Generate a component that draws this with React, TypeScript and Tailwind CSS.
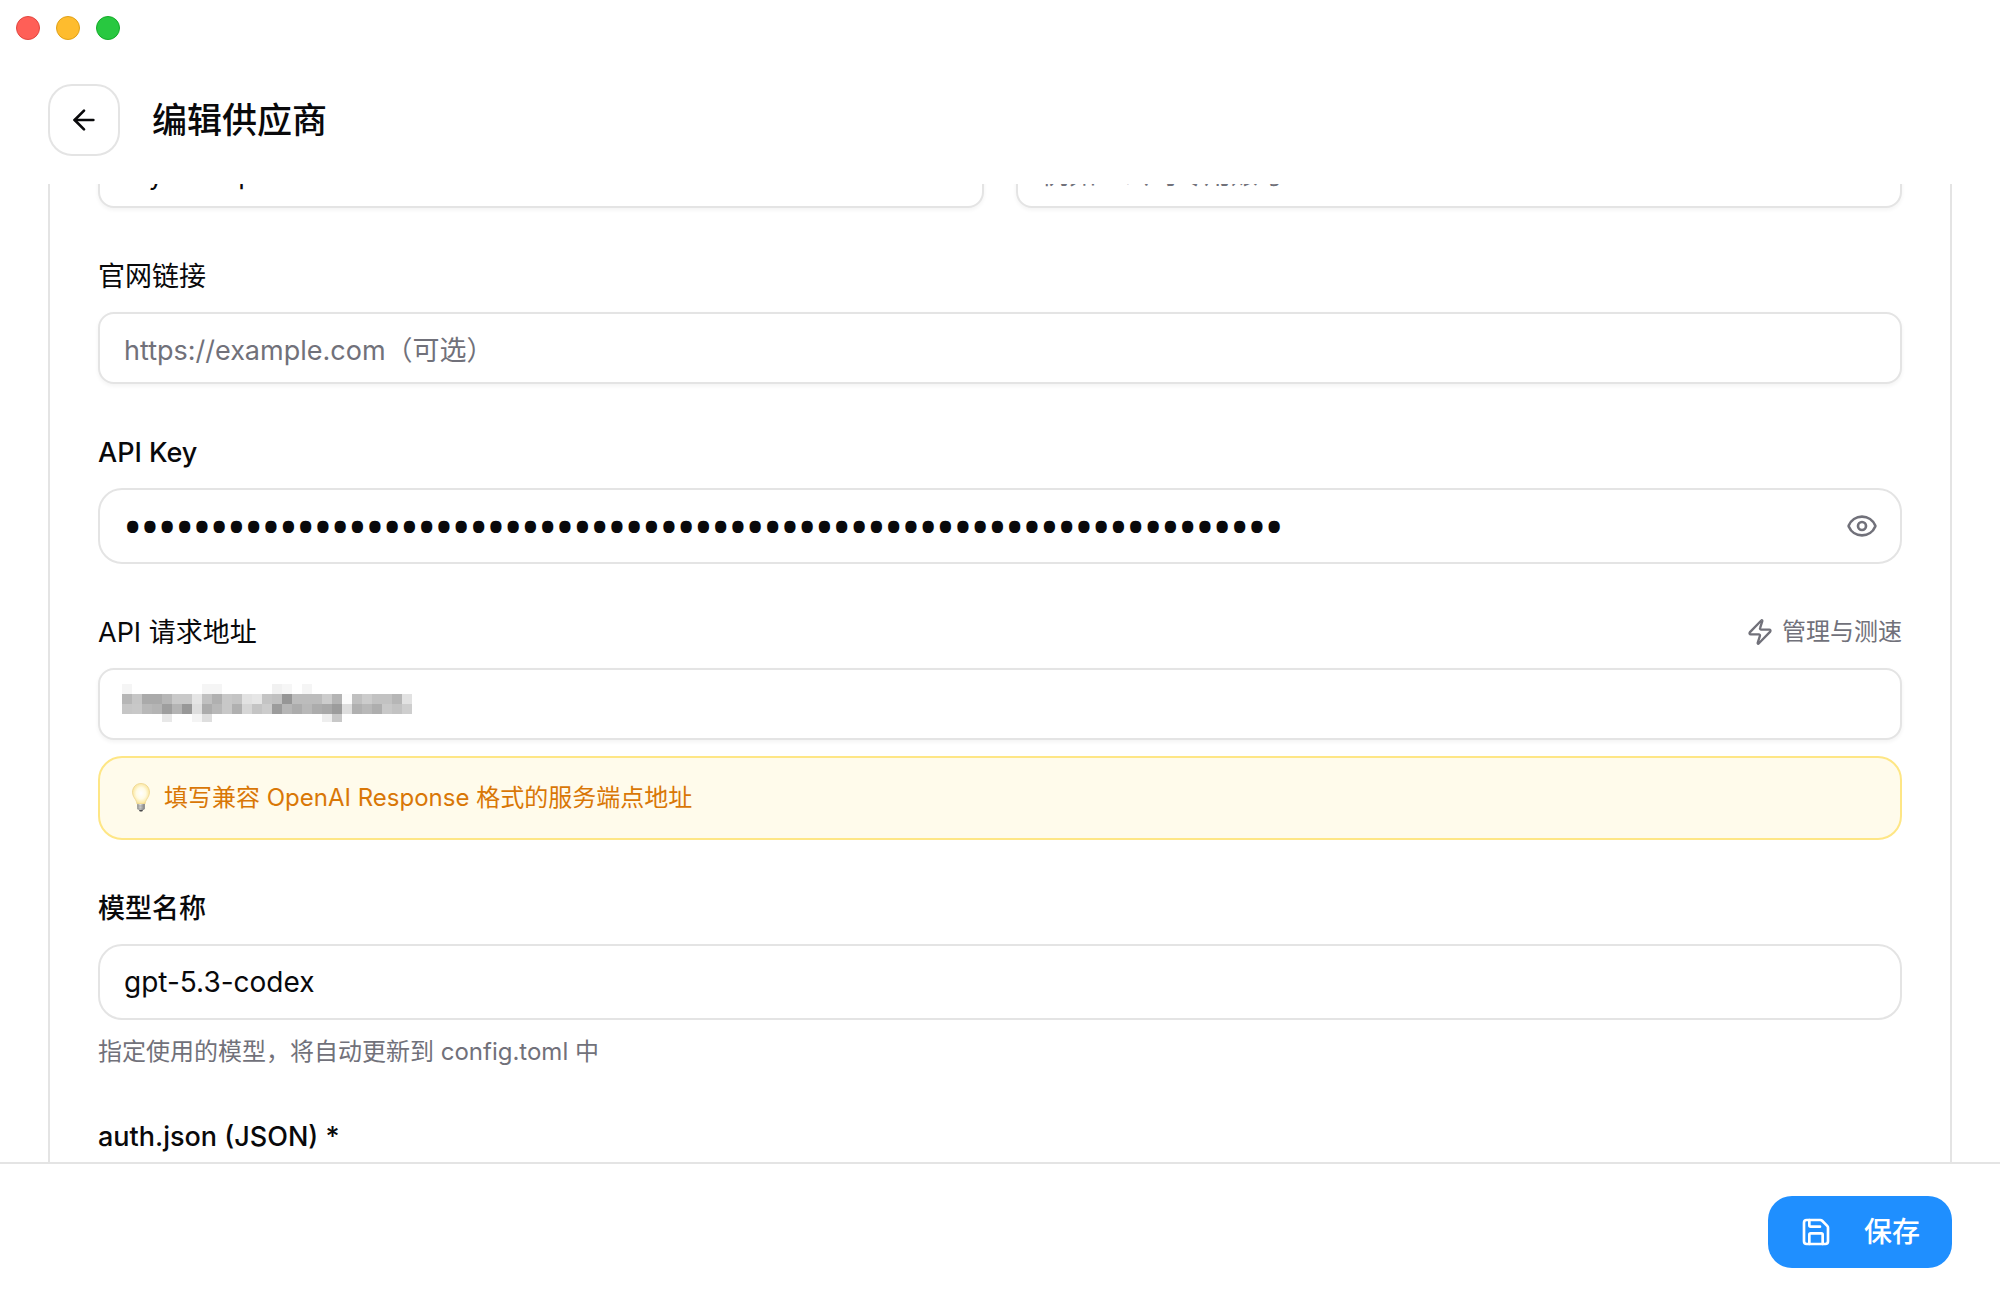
import { useLayoutEffect, useRef, useState } from "react";
import type { InputHTMLAttributes, ReactNode } from "react";
import { clsx } from "clsx";
import { ArrowLeft, Eye, EyeOff, Save, Zap } from "lucide-react";

const SCROLL_START = 154;

// Gray levels of the masked address, one list per row of cells.
const MASK_ROWS: { y: number; height: number; cells: Record<number, string> }[] = [
  { y: 0, height: 10, cells: { 0: "f5", 8: "f5", 9: "f5", 15: "f1", 16: "f6", 18: "f5" } },
  { y: 10, height: 10, cells: toCells("b6 c6 aa aa b6 c9 c9 e5 c0 b0 c8 c4 e2 e6 c4 c0 96 bc bc bc cc b4 fc c0 cc c2 c2 b6 e2") },
  { y: 20, height: 10, cells: toCells("c6 c8 b8 b4 9e b4 98 de ac b8 c8 b0 d6 c4 cc 9c b6 ac b8 ac a8 9c de b0 b8 ae c8 c2 ce") },
  { y: 30, height: 8, cells: { 4: "e8", 7: "f4", 8: "de", 20: "ee", 21: "c8" } },
];

function toCells(row: string) {
  return Object.fromEntries(row.split(" ").map((gray, i) => [i, gray]));
}

function MaskedValue() {
  return (
    <svg width="290" height="40" viewBox="0 0 290 40" shapeRendering="crispEdges" aria-hidden="true">
      {MASK_ROWS.map((row) =>
        Object.entries(row.cells).map(([i, gray]) => (
          <rect
            key={`${row.y}-${i}`}
            x={Number(i) * 10}
            y={row.y}
            width="10"
            height={row.height}
            fill={`#${gray}${gray}${gray}`}
          />
        ))
      )}
    </svg>
  );
}

function BulbIcon() {
  return (
    <svg width="28" height="32" viewBox="0 0 28 32" aria-hidden="true" className="shrink-0">
      <defs>
        <radialGradient id="bulb-glass" cx="50%" cy="48%" r="55%">
          <stop offset="0" stopColor="#ffffff" />
          <stop offset="0.5" stopColor="#fffbe4" />
          <stop offset="0.85" stopColor="#fbe9a8" />
          <stop offset="1" stopColor="#efd488" />
        </radialGradient>
        <linearGradient id="bulb-base" x1="0" x2="1" y1="0" y2="0">
          <stop offset="0" stopColor="#8f8f8c" />
          <stop offset="0.4" stopColor="#e4e4e2" />
          <stop offset="1" stopColor="#77777a" />
        </linearGradient>
      </defs>
      <path
        d="M13 1.500C7.900 1.500 4.500 5.400 4.500 10.100c0 3.200 1.500 5.200 2.900 7.400 1 1.600 1.300 2.700 1.600 4.500h8c.3-1.800.6-2.900 1.600-4.500 1.400-2.200 2.900-4.200 2.900-7.400C21.500 5.400 18.100 1.500 13 1.500Z"
        fill="url(#bulb-glass)"
        stroke="#eed68f"
        strokeWidth="0.8"
      />
      <path d="M9.200 22h7.600v4.200c0 1-.8 1.800-1.800 1.800h-4c-1 0-1.800-.8-1.800-1.800Z" fill="url(#bulb-base)" />
      <path d="M9.200 24h7.600M9.400 26.100h7.200" stroke="#8a8a88" strokeWidth="0.7" />
      <path d="M10.800 27.800h4.400l-1 1.700h-2.400Z" fill="#4b4b4d" />
    </svg>
  );
}

function Field({
  id,
  label,
  labelWeight = "font-medium",
  action,
  children,
}: {
  id: string;
  label: string;
  labelWeight?: string;
  action?: ReactNode;
  children: ReactNode;
}) {
  return (
    <div className="flex flex-col gap-4">
      <div className="flex items-center justify-between">
        <label htmlFor={id} className={clsx("pt-0.5 text-[27px] leading-[38px]", labelWeight)}>
          {label}
        </label>
        {action}
      </div>
      {children}
    </div>
  );
}

function Input(props: InputHTMLAttributes<HTMLInputElement>) {
  return (
    <input
      {...props}
      className="h-[72px] w-full rounded-2xl border-2 border-[#e4e4e4] bg-white px-6 pt-1 text-[27px] shadow-[0_2px_4px_rgba(0,0,0,0.05)] outline-none placeholder:text-[#71717a]"
    />
  );
}

export default function App() {
  const scrollRef = useRef<HTMLElement>(null);
  const [showKey, setShowKey] = useState(false);
  const [apiKey, setApiKey] = useState("x".repeat(67));

  useLayoutEffect(() => {
    if (scrollRef.current) {
      scrollRef.current.scrollTop = SCROLL_START;
    }
  }, []);

  return (
    <div className="flex h-screen flex-col bg-white font-[Inter,'Noto_Sans_CJK_SC',sans-serif] text-[#09090b]">
      <div className="flex h-14 shrink-0 items-center gap-4 px-4">
        <span className="size-6 rounded-full border border-[#e2463f] bg-[#ff5f57]" />
        <span className="size-6 rounded-full border border-[#e1a116] bg-[#febc2e]" />
        <span className="size-6 rounded-full border border-[#12ac28] bg-[#28c840]" />
      </div>

      <header className="flex h-32 shrink-0 items-center gap-8 px-12">
        <button
          type="button"
          aria-label="返回"
          className="grid size-[72px] place-items-center rounded-3xl border-2 border-[#e4e4e4] bg-white"
        >
          <ArrowLeft size={32} />
        </button>
        <h1 className="text-[35px] leading-none font-medium">编辑供应商</h1>
      </header>

      <main ref={scrollRef} className="min-h-0 flex-1 overflow-y-auto px-12 [scrollbar-width:none]">
        <form id="provider-form" className="flex flex-col gap-12 rounded-3xl border-2 border-[#e4e4e4] p-12">
          <div className="grid grid-cols-2 gap-8">
            <Field id="name" label="供应商名称">
              <Input id="name" defaultValue="MyNewApi" />
            </Field>
            <Field id="notes" label="备注">
              <Input id="notes" placeholder="例如：公司专用账号" />
            </Field>
          </div>

          <Field id="website" label="官网链接" labelWeight="font-normal">
            <Input id="website" placeholder="https://example.com（可选）" />
          </Field>

          <Field id="api-key" label="API Key">
            <div className="flex h-[76px] items-center rounded-3xl border-2 border-[#e4e4e4] pr-[22px] pl-6">
              <input
                id="api-key"
                type={showKey ? "text" : "password"}
                value={apiKey}
                onChange={(event) => setApiKey(event.target.value)}
                className={clsx(
                  "h-full min-w-0 flex-1 outline-none",
                  showKey ? "text-[28px]" : "pb-0.5 font-['Open_Sans',sans-serif] text-[46px] font-semibold"
                )}
              />
              <button
                type="button"
                aria-label="显示"
                onClick={() => setShowKey(!showKey)}
                className="text-[#71717a]"
              >
                {showKey ? <EyeOff size={32} /> : <Eye size={32} />}
              </button>
            </div>
          </Field>

          <Field
            id="base-url"
            label="API 请求地址"
            labelWeight="font-normal"
            action={
              <button type="button" className="flex items-center gap-2 text-2xl text-[#71717a]">
                <Zap size={28} />
                管理与测速
              </button>
            }
          >
            <div className="relative">
              <Input id="base-url" />
              <div className="pointer-events-none absolute inset-y-0 left-6 flex items-center">
                <MaskedValue />
              </div>
            </div>
            <p className="flex h-[84px] items-center gap-2 rounded-3xl border-2 border-[#fee685] bg-[#fffbeb] px-7 text-2xl text-[#d97706]">
              <BulbIcon />
              填写兼容 OpenAI Response 格式的服务端点地址
            </p>
          </Field>

          <Field id="model" label="模型名称">
            <input
              id="model"
              defaultValue="gpt-5.3-codex"
              className="h-[76px] w-full rounded-3xl border-2 border-[#e4e4e4] px-6 text-[28px] outline-none"
            />
            <p className="text-2xl text-[#71717a]">指定使用的模型，将自动更新到 config.toml 中</p>
          </Field>

          <Field id="auth-json" label="auth.json (JSON) *">
            <textarea id="auth-json" rows={6} className="w-full rounded-3xl border-2 border-[#e4e4e4] p-6" />
          </Field>
        </form>
      </main>

      <footer className="flex shrink-0 justify-end border-t-2 border-[#e4e4e4] px-12 py-8">
        <button
          type="submit"
          form="provider-form"
          className="flex h-[72px] items-center gap-8 rounded-3xl bg-[#1f8fff] px-8 text-[28px] font-medium text-white"
        >
          <Save size={32} />
          保存
        </button>
      </footer>
    </div>
  );
}
